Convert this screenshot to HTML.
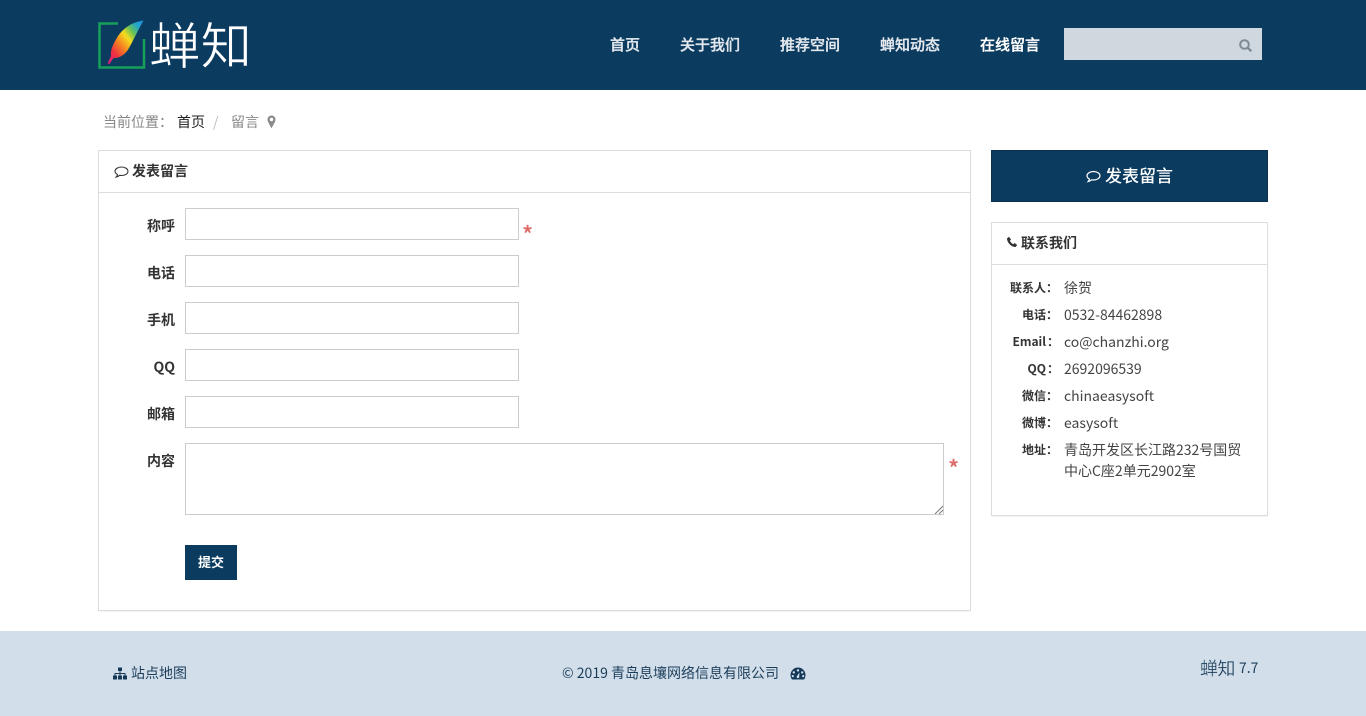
<!DOCTYPE html>
<html lang="zh-CN"><head><meta charset="utf-8"><title>发表留言</title>
<style>
*{box-sizing:border-box}
html,body{margin:0;padding:0}
body{width:1366px;height:716px;overflow:hidden;position:relative;background:#fff;font-family:"Noto Sans CJK SC","Liberation Sans",sans-serif;font-size:14px;color:#333}
.a{position:absolute;white-space:nowrap;line-height:20px}
.hd{position:absolute;left:0;top:0;width:1366px;height:90px;background:#0c3b60}
.nav{color:#e4e9ee;font-size:15px;font-weight:500;top:35px;-webkit-text-stroke:.3px currentColor}
.panel{position:absolute;background:#fff;border:1px solid #ddd;box-shadow:0 1px 1px rgba(0,0,0,.05)}
.line{position:absolute;height:1px;background:#ddd}
.b{font-weight:700}
.lab{font-weight:700;font-size:14px;width:60px;text-align:right;left:115px}
.inp{position:absolute;left:185px;width:334px;height:32px;border:1px solid #ccc;background:#fff}
.req{color:#d9534f;font-size:24px;opacity:.85;-webkit-text-stroke:.4px #d9534f}
.cl{font-weight:700;font-size:12px;width:70px;text-align:right;left:988px;color:#333}
.cv{left:1064px;font-size:14px;color:#444}
.ft{position:absolute;left:0;top:631px;width:1366px;height:85px;background:#d2dfeb}
.fc{color:#1c3d59;font-size:14px}
</style></head><body>
<div class="hd"></div>
<svg class="a" style="left:98px;top:18px" width="50" height="54" viewBox="0 0 50 54">
<defs><linearGradient id="g" x1="0" y1="1" x2="1" y2="0"><stop offset="0" stop-color="#d81b8c"/><stop offset=".22" stop-color="#ee3140"/><stop offset=".42" stop-color="#f58a1f"/><stop offset=".58" stop-color="#f5dc1e"/><stop offset=".72" stop-color="#66c05a"/><stop offset=".85" stop-color="#25a6c8"/><stop offset="1" stop-color="#1c8fe6"/></linearGradient></defs>
<path d="M20 5.500H1.500V49.500H46V21" fill="none" stroke="#16a05a" stroke-width="2.500"/>
<path d="M45.500 2.500C35 4 26 9 20 18C15 26 12 33 13 38L9.500 45.500L11.500 46L15.500 40C21 40.500 27 37 31 30C35 23 40 12 45.500 2.500Z" fill="url(#g)"/>
</svg>
<div class="a" style="left:149px;top:17px;line-height:52px;font-size:50px;color:#fff;-webkit-text-stroke:.7px #0c3b60;transform:scaleX(1.03);transform-origin:0 50%">蝉知</div>
<div class="a nav" style="left:610px">首页</div>
<div class="a nav" style="left:680px">关于我们</div>
<div class="a nav" style="left:780px">推荐空间</div>
<div class="a nav" style="left:880px">蝉知动态</div>
<div class="a nav" style="left:980px;color:#fff">在线留言</div>
<div style="position:absolute;left:1064px;top:28px;width:198px;height:32px;background:#cfd8df"></div>
<svg class="a" style="left:1238px;top:38px" width="15" height="15" viewBox="0 0 15 15"><circle cx="6.500" cy="6.500" r="4.300" fill="none" stroke="#808a92" stroke-width="2"/><path d="M9.800 9.800L13.300 13.300" stroke="#808a92" stroke-width="2.400"/></svg>

<div class="a" style="left:103px;top:112px;color:#888">当前位置：</div>
<div class="a" style="left:177px;top:112px;color:#222">首页</div>
<div class="a" style="left:213px;top:112px;color:#bbb">/</div>
<div class="a" style="left:231px;top:112px;color:#888">留言</div>
<svg class="a" style="left:267px;top:115px" width="9" height="14" viewBox="0 0 9 14"><path fill-rule="evenodd" d="M4.500 0.500A4 4 0 0 1 8.500 4.500C8.500 7 5.500 11 4.500 13.500C3.500 11 0.500 7 0.500 4.500A4 4 0 0 1 4.500 0.500ZM4.500 2.800A1.700 1.700 0 1 0 4.500 6.200A1.700 1.700 0 1 0 4.500 2.800Z" fill="#8a8a8a"/></svg>

<div class="panel" style="left:98px;top:150px;width:873px;height:461px"></div>
<div class="line" style="left:99px;top:192px;width:871px"></div>
<svg class="a" style="left:114px;top:165px" width="15" height="14" viewBox="0 0 15 14"><path d="M7.500 2C11 2 14 3.900 14 6.300C14 8.700 11 10.500 7.500 10.500C6.800 10.500 6.200 10.400 5.600 10.300C4.600 11.200 3.300 11.800 2.200 12C3 11.200 3.400 10.300 3.400 9.500C1.900 8.700 1 7.600 1 6.300C1 3.900 4 2 7.500 2Z" fill="none" stroke="#333" stroke-width="1.100"/></svg>
<div class="a b" style="left:132px;top:161px;color:#333">发表留言</div>

<div class="a lab" style="top:216px">称呼</div><div class="inp" style="top:208px"></div><div class="a req" style="left:522px;top:224px">*</div>
<div class="a lab" style="top:263px">电话</div><div class="inp" style="top:255px"></div>
<div class="a lab" style="top:310px">手机</div><div class="inp" style="top:302px"></div>
<div class="a lab" style="top:357px">QQ</div><div class="inp" style="top:349px"></div>
<div class="a lab" style="top:404px">邮箱</div><div class="inp" style="top:396px"></div>
<div class="a lab" style="top:451px">内容</div>
<div class="inp" style="top:443px;width:759px;height:72px"></div>
<svg class="a" style="left:934px;top:505px" width="9" height="9" viewBox="0 0 9 9"><path d="M1 9L9 1M5 9L9 5" stroke="#777" stroke-width="1"/></svg>
<div class="a req" style="left:948px;top:458px">*</div>
<div class="a b" style="left:185px;top:545px;width:52px;height:35px;line-height:34px;text-align:center;background:#0c3b60;color:#fff;font-size:13px">提交</div>

<div style="position:absolute;left:991px;top:150px;width:277px;height:52px;background:#0c3b60;border:1px solid #0a3050"></div>
<svg class="a" style="left:1086px;top:169px" width="15" height="15" viewBox="0 0 15 14"><path d="M7.500 2C11 2 14 3.900 14 6.300C14 8.700 11 10.500 7.500 10.500C6.800 10.500 6.200 10.400 5.600 10.300C4.600 11.200 3.300 11.800 2.200 12C3 11.200 3.400 10.300 3.400 9.500C1.900 8.700 1 7.600 1 6.300C1 3.900 4 2 7.500 2Z" fill="none" stroke="#fff" stroke-width="1.200"/></svg>
<div class="a" style="left:1105px;top:164px;line-height:22px;font-size:17px;font-weight:500;color:#fff">发表留言</div>

<div class="panel" style="left:991px;top:222px;width:277px;height:294px"></div>
<div class="line" style="left:992px;top:264px;width:275px"></div>
<svg class="a" style="left:1006px;top:236px" width="12" height="12" viewBox="0 0 12 12"><path d="M1 2.500L3 0.800L5 3.500L3.900 4.800C4.500 6.200 5.800 7.600 7.300 8.200L8.600 7L11.200 9L9.600 11C5.500 11.200 1 6.500 1 2.500Z" fill="#333"/></svg>
<div class="a b" style="left:1021px;top:233px;color:#333">联系我们</div>

<div class="a cl" style="top:278px">联系人：</div><div class="a cv" style="top:278px">徐贺</div>
<div class="a cl" style="top:305px">电话：</div><div class="a cv" style="top:305px">0532-84462898</div>
<div class="a cl" style="top:332px;left:989px">Email<span style="margin-left:1px">：</span></div><div class="a cv" style="top:332px">co@chanzhi.org</div>
<div class="a cl" style="top:359px;left:989px">QQ<span style="margin-left:1px">：</span></div><div class="a cv" style="top:359px">2692096539</div>
<div class="a cl" style="top:386px">微信：</div><div class="a cv" style="top:386px">chinaeasysoft</div>
<div class="a cl" style="top:413px">微博：</div><div class="a cv" style="top:413px">easysoft</div>
<div class="a cl" style="top:440px">地址：</div><div class="a cv" style="top:440px">青岛开发区长江路232号国贸</div>
<div class="a cv" style="top:461px">中心C座2单元2902室</div>

<div class="ft"></div>
<svg class="a" style="left:113px;top:667px" width="14" height="13" viewBox="0 0 14 13"><path d="M5 0.500H9V4H7.500V6H12.500V8.500H14V12.500H10V8.500H11.500V7H7.500V8.500H9V12.500H5V8.500H6.500V7H2.500V8.500H4V12.500H0V8.500H1.500V6H6.500V4H5Z" fill="#16395a"/></svg>
<div class="a fc" style="left:131px;top:663px">站点地图</div>
<div class="a fc" style="left:562px;top:663px">© 2019 青岛息壤网络信息有限公司</div>
<svg class="a" style="left:790px;top:667px" width="16" height="13" viewBox="0 0 16 13"><path fill-rule="evenodd" d="M8 0.500A7.500 7.500 0 0 1 15.500 8C15.500 9.800 15 11.200 14 12.500H2C1 11.200 0.500 9.800 0.500 8A7.500 7.500 0 0 1 8 0.500ZM8 2.200A1.200 1.200 0 1 0 8 4.600A1.200 1.200 0 1 0 8 2.200ZM3.800 4.200A1.200 1.200 0 1 0 3.800 6.600A1.200 1.200 0 1 0 3.800 4.200ZM12.200 4.200A1.200 1.200 0 1 0 12.200 6.600A1.200 1.200 0 1 0 12.200 4.200ZM2.800 8A1.100 1.100 0 1 0 2.800 10.200A1.100 1.100 0 1 0 2.800 8ZM13.200 8A1.100 1.100 0 1 0 13.200 10.200A1.100 1.100 0 1 0 13.200 8ZM7 9L9.500 5.500L9.200 9.500A1.300 1.300 0 1 1 7 9Z" fill="#16395a"/></svg>
<div class="a fc" style="left:1200px;top:658px;font-size:18px;letter-spacing:-.5px;-webkit-text-stroke:.25px #d2dfeb">蝉知</div>
<div class="a fc" style="left:1239px;top:658px">7.7</div>
</body></html>
